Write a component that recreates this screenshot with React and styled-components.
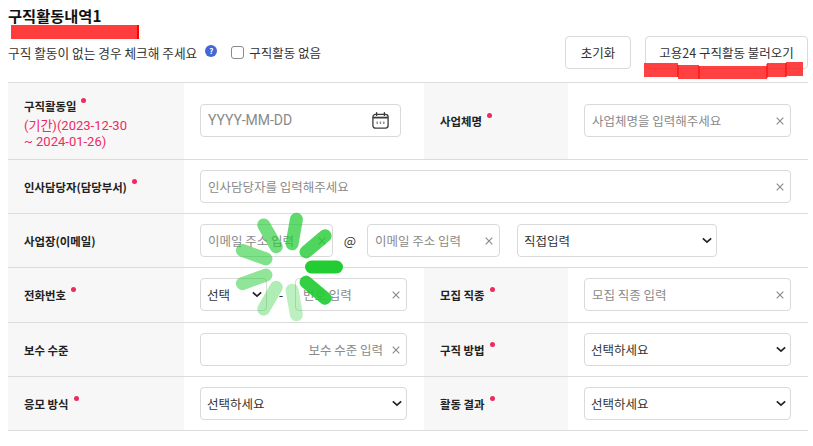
import styled, { createGlobalStyle } from 'styled-components';

const GlobalStyle = createGlobalStyle`
  html, body { margin: 0; padding: 0; background: #fff; }
  body { font-family: "Noto Sans CJK KR", "Noto Sans", sans-serif; color: #222; overflow: hidden; }
  * { box-sizing: border-box; }
`;

function CalendarIcon() {
    return (
        <CalendarSvg viewBox="0 0 17 17" fill="none" stroke="#3c3c3c" strokeWidth="1.3">
            <rect x="0.9" y="2.4" width="15.2" height="13.8" rx="2.6" />
            <path d="M0.9 5.6h15.2" strokeWidth="1.8" />
            <path d="M4.6 0.8v2.6M12.4 0.8v2.6" strokeWidth="1.4" strokeLinecap="round" />
            <path d="M5.2 9.4v2.6M8.5 9.4v2.6M11.8 9.4v2.6" stroke="#8a8a8a" strokeWidth="1.4" />
        </CalendarSvg>
    );
}

function ClearIcon() {
    return (
        <ClearSvg viewBox="0 0 8 8" stroke="#8c8c8c" strokeWidth="1.2">
            <path d="M0.7 0.7l6.6 6.6M7.3 0.7l-6.6 6.6" />
        </ClearSvg>
    );
}

function TextField({ placeholder, width, right }) {
    return (
        <FieldBox $width={width}>
            <FieldInput placeholder={placeholder} $right={right} readOnly />
            <ClearIcon />
        </FieldBox>
    );
}

function SelectField({ value, width }) {
    return (
        <SelectBox $width={width}>
            <NativeSelect defaultValue={value}>
                <option>{value}</option>
            </NativeSelect>
            <ChevronSvg viewBox="0 0 12 8" fill="none" stroke="#222" strokeWidth="2">
                <path d="M1 1.5l5 4.5 5-4.5" />
            </ChevronSvg>
        </SelectBox>
    );
}

const SPINNER_BARS = [1, 0.92, 0.3, 0.36, 0.5, 0.58, 0.64, 0.72, 0.8];

function Spinner() {
    return (
        <SpinnerSvg viewBox="0 0 120 120">
            {SPINNER_BARS.map((opacity, i) => (
                <rect
                    key={i}
                    x="77"
                    y="53.5"
                    width="38"
                    height="13"
                    rx="6.5"
                    fill="#22cc33"
                    opacity={opacity}
                    transform={`rotate(${i * 40} 60 60)`}
                />
            ))}
        </SpinnerSvg>
    );
}

export default function App() {
    return (
        <Page>
            <GlobalStyle />
            <Title>구직활동내역1</Title>
            <TitleScribble />
            <Toolbar>
                <Hint>구직 활동이 없는 경우 체크해 주세요</Hint>
                <HelpBadge>?</HelpBadge>
                <CheckLabel>
                    <CheckBox type="checkbox" />
                    구직활동 없음
                </CheckLabel>
                <Actions>
                    <ActionButton $width={66}>초기화</ActionButton>
                    <ActionButton $width={163}>고용24 구직활동 불러오기</ActionButton>
                </Actions>
            </Toolbar>
            <ButtonScribble viewBox="0 0 160 18">
                <path d="M0 1H34V3H55V4H123V1H142V0H159V14H142V15H123V17H34V15H0Z" fill="#ff2020" opacity="0.85" />
                <path d="M34 3V15M55 4V17M123 2V16M142 1V15" stroke="#f00" />
            </ButtonScribble>
            <Form>
                <Row $height={77}>
                    <LabelCell $raised>
                        <LabelText>구직활동일<Dot /></LabelText>
                        <PeriodText>(기간)(2023-12-30<br />~ 2024-01-26)</PeriodText>
                    </LabelCell>
                    <InputCell $even>
                        <FieldBox $width={201}>
                            <DateInput placeholder="YYYY-MM-DD" readOnly />
                            <CalendarIcon />
                        </FieldBox>
                    </InputCell>
                    <LabelCell><LabelText>사업체명<Dot /></LabelText></LabelCell>
                    <InputCell $even><TextField placeholder="사업체명을 입력해주세요" width={207} /></InputCell>
                </Row>
                <Row $height={54}>
                    <LabelCell><LabelText>인사담당자(담당부서)<Dot /></LabelText></LabelCell>
                    <SpanCell><TextField placeholder="인사담당자를 입력해주세요" width={591} /></SpanCell>
                </Row>
                <Row $height={54}>
                    <LabelCell><LabelText>사업장(이메일)</LabelText></LabelCell>
                    <SpanCell>
                        <TextField placeholder="이메일 주소 입력" width={133} />
                        <Joiner $width={34}>@</Joiner>
                        <TextField placeholder="이메일 주소 입력" width={133} />
                        <SelectGap />
                        <SelectField value="직접입력" width={200} />
                    </SpanCell>
                </Row>
                <Row $height={55}>
                    <LabelCell><LabelText>전화번호<Dot /></LabelText></LabelCell>
                    <InputCell $even>
                        <SelectField value="선택" width={67} />
                        <Joiner $width={28}>-</Joiner>
                        <TextField placeholder="번호 입력" width={112} />
                    </InputCell>
                    <LabelCell><LabelText>모집 직종<Dot /></LabelText></LabelCell>
                    <InputCell $even><TextField placeholder="모집 직종 입력" width={207} /></InputCell>
                </Row>
                <Row $height={54}>
                    <LabelCell><LabelText>보수 수준</LabelText></LabelCell>
                    <InputCell><TextField placeholder="보수 수준 입력" width={207} right /></InputCell>
                    <LabelCell><LabelText>구직 방법<Dot /></LabelText></LabelCell>
                    <InputCell><SelectField value="선택하세요" width={207} /></InputCell>
                </Row>
                <Row $height={54}>
                    <LabelCell><LabelText>응모 방식<Dot /></LabelText></LabelCell>
                    <InputCell><SelectField value="선택하세요" width={207} /></InputCell>
                    <LabelCell><LabelText>활동 결과<Dot /></LabelText></LabelCell>
                    <InputCell><SelectField value="선택하세요" width={207} /></InputCell>
                </Row>
            </Form>
            <Spinner />
        </Page>
    );
}

const Page = styled.div`
  position: relative;
  width: 813px;
  height: 446px;
  padding: 4px 5px 0 8px;
  overflow: hidden;
`;

const Title = styled.h2`
  margin: 0;
  font-size: 15.3px;
  line-height: 23px;
  font-weight: 700;
  color: #111;
`;

const TitleScribble = styled.div`
  position: absolute;
  left: 11px;
  top: 25px;
  width: 128px;
  height: 14px;
  background: #ff3d3d;
  border-right: 2px solid #f00;
`;

const ButtonScribble = styled.svg`
  position: absolute;
  left: 644px;
  top: 62px;
  width: 160px;
  height: 18px;
`;

const Toolbar = styled.div`
  display: flex;
  align-items: center;
  height: 55px;
  padding-bottom: 5px;
  font-size: 12.7px;
  color: #333;
`;

const Hint = styled.span`
  flex: none;
`;

const HelpBadge = styled.span`
  display: flex;
  align-items: center;
  justify-content: center;
  flex: none;
  width: 12px;
  height: 12px;
  margin: -3px 0 0 8px;
  border-radius: 50%;
  background: #4466d6;
  color: #fff;
  font-size: 8px;
  font-weight: 700;
`;

const CheckLabel = styled.label`
  display: flex;
  align-items: center;
  margin-left: 14px;
  font-size: 12.5px;
`;

const CheckBox = styled.input`
  appearance: none;
  width: 13px;
  height: 13px;
  margin: 0 5px 0 0;
  border: 1px solid #8a8a8a;
  border-radius: 3px;
  background: #fff;
`;

const Actions = styled.div`
  display: flex;
  gap: 14px;
  margin-left: auto;
`;

const ActionButton = styled.button`
  width: ${props => props.$width}px;
  height: 33px;
  padding: 0;
  border: 1px solid #d9d9d9;
  border-radius: 4px;
  background: #fff;
  color: #333;
  font: inherit;
  font-size: 12.5px;
`;

const Form = styled.div`
  border-top: 1px solid #dcdcdc;
`;

const Row = styled.div`
  display: grid;
  grid-template-columns: 176px 240px 144px 240px;
  height: ${props => props.$height}px;
  border-bottom: 1px solid #dcdcdc;
`;

const LabelCell = styled.div`
  display: flex;
  flex-direction: column;
  justify-content: center;
  padding-left: 16px;
  padding-top: ${props => (props.$raised ? 4 : 0)}px;
  background: #f7f7f7;
`;

const LabelText = styled.div`
  display: flex;
  font-size: 11.4px;
  font-weight: 700;
  line-height: 18px;
  color: #222;
`;

const Dot = styled.i`
  width: 5px;
  height: 5px;
  margin: 1px 0 0 5px;
  border-radius: 50%;
  background: #ee2a5f;
`;

const PeriodText = styled.div`
  margin-top: 3px;
  font-family: Roboto, "Noto Sans CJK KR", sans-serif;
  font-size: 13px;
  line-height: 16px;
  color: #ee2a5f;
`;

const InputCell = styled.div`
  display: flex;
  align-items: center;
  padding-left: 16px;
  padding-bottom: ${props => (props.$even ? 1 : 0)}px;
`;

const SpanCell = styled(InputCell)`
  grid-column: span 3;
`;

const FieldBox = styled.div`
  display: flex;
  align-items: center;
  flex: none;
  width: ${props => props.$width}px;
  height: 33px;
  padding: 0 6px 0 7px;
  border: 1px solid #d9d9d9;
  border-radius: 4px;
  background: #fff;
`;

const FieldInput = styled.input`
  flex: 1;
  min-width: 0;
  height: 100%;
  padding: 0 0 1px;
  border: 0;
  outline: 0;
  background: none;
  font: inherit;
  font-size: 12.5px;
  color: #333;
  text-align: ${props => (props.$right ? 'right' : 'left')};
  margin-right: ${props => (props.$right ? '9px' : '0')};
  &::placeholder { color: #8a8a8a; opacity: 1; }
`;

const DateInput = styled(FieldInput)`
  font-family: Roboto, sans-serif;
  font-size: 14px;
`;

const ClearSvg = styled.svg`
  flex: none;
  width: 8px;
  height: 8px;
`;

const CalendarSvg = styled.svg`
  flex: none;
  width: 17px;
  height: 17px;
  margin-right: 5px;
`;

const SelectBox = styled.div`
  position: relative;
  flex: none;
  width: ${props => props.$width}px;
  height: 33px;
`;

const NativeSelect = styled.select`
  appearance: none;
  width: 100%;
  height: 100%;
  padding: 0 24px 0 6px;
  border: 1px solid #d9d9d9;
  border-radius: 4px;
  background: #fff;
  font: inherit;
  font-size: 12.5px;
  color: #333;
`;

const ChevronSvg = styled.svg`
  position: absolute;
  right: 5px;
  top: 13px;
  width: 10px;
  height: 7px;
  pointer-events: none;
`;

const Joiner = styled.span`
  flex: none;
  width: ${props => props.$width}px;
  text-align: center;
  font-size: 13px;
  color: #333;
`;

const SelectGap = styled.span`
  flex: none;
  width: 17px;
`;

const SpinnerSvg = styled.svg`
  position: absolute;
  left: 227.5px;
  top: 206.5px;
  width: 120px;
  height: 120px;
  pointer-events: none;
`;
